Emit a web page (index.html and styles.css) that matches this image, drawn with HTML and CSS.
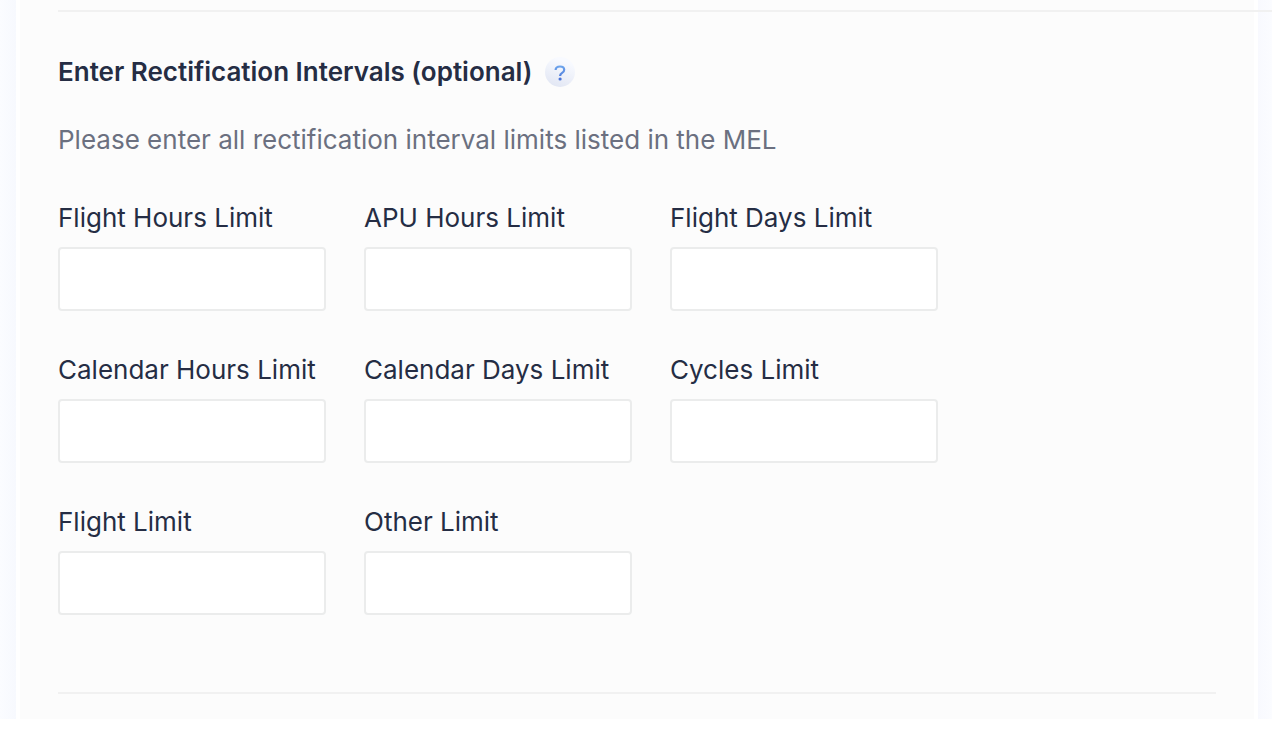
FILE: index.html
```
<!DOCTYPE html>
<html lang="en">
<head>
    <meta charset="UTF-8">
    <meta name="viewport" content="width=device-width, initial-scale=1.0">
    <title>Rectification Intervals</title>
    <link rel="stylesheet" href="styles.css">
</head>
<body>
    <main class="page">
        <form class="panel">
            <hr class="divider divider-wide">

            <section class="section">
                <div class="section-header">
                    <h2>Enter Rectification Intervals (optional)</h2>
                    <button type="button" class="help" aria-label="Help">
                        <svg width="30" height="30" viewBox="0 0 30 30" fill="none">
                            <defs>
                                <linearGradient id="help-mark" x1="0" y1="8" x2="0" y2="23" gradientUnits="userSpaceOnUse">
                                    <stop offset="0" stop-color="#6fa8ee"/>
                                    <stop offset="1" stop-color="#4a74d8"/>
                                </linearGradient>
                            </defs>
                            <path d="M10.6 13C10.7 10.8 12.5 9.5 15 9.5C17.6 9.5 19.2 10.8 19.2 12.8C19.2 14.3 18.4 15.1 17.1 15.9C15.6 16.8 15.1 17.5 15.1 19" stroke="url(#help-mark)" stroke-width="2.2"/>
                            <circle cx="15.1" cy="22" r="1.6" fill="#4a74d8"/>
                        </svg>
                    </button>
                </div>
                <p class="hint">Please enter all rectification interval limits listed in the MEL</p>

                <div class="fields">
                    <div class="field">
                        <label for="flight-hours">Flight Hours Limit</label>
                        <input type="text" id="flight-hours">
                    </div>
                    <div class="field">
                        <label for="apu-hours">APU Hours Limit</label>
                        <input type="text" id="apu-hours">
                    </div>
                    <div class="field">
                        <label for="flight-days">Flight Days Limit</label>
                        <input type="text" id="flight-days">
                    </div>
                    <div class="field">
                        <label for="calendar-hours">Calendar Hours Limit</label>
                        <input type="text" id="calendar-hours">
                    </div>
                    <div class="field">
                        <label for="calendar-days">Calendar Days Limit</label>
                        <input type="text" id="calendar-days">
                    </div>
                    <div class="field">
                        <label for="cycles">Cycles Limit</label>
                        <input type="text" id="cycles">
                    </div>
                    <div class="field">
                        <label for="flight">Flight Limit</label>
                        <input type="text" id="flight">
                    </div>
                    <div class="field">
                        <label for="other">Other Limit</label>
                        <input type="text" id="other">
                    </div>
                </div>
            </section>

            <hr class="divider">
        </form>
    </main>
</body>
</html>
```

FILE: styles.css
```
:root {
    --text: #252d44;
    --text-light: #6b7080;
    --border: #ebecec;
    --divider: #f1f1f1;
    --panel: #fcfcfc;
}

* {
    box-sizing: border-box;
    margin: 0;
    padding: 0;
}

body {
    font-family: Inter, 'Liberation Sans', sans-serif;
    font-size: 26px;
    line-height: 32px;
    color: var(--text);
    background: white;
}

.page {
    padding: 0 14px 0 16px;
    background: linear-gradient(to right, #fbfcff 0, #f7f9fe 16px, #f8f9fe calc(100% - 14px), #fbfcff 100%);
    overflow: hidden;
}

.panel {
    padding: 10px 38px 25px;
    background: var(--panel);
    border: solid white;
    border-width: 0 4px;
}

.divider {
    height: 2px;
    border: none;
    background: var(--divider);
}

/* runs past the panel to the edge of the page */
.divider-wide {
    margin-right: -56px;
}

.section {
    padding: 44px 0 77px;
}

.section-header {
    display: flex;
    align-items: center;
    gap: 13px;
}

h2 {
    font-size: 26px;
    font-weight: 600;
}

.help {
    width: 30px;
    height: 30px;
    border: none;
    border-radius: 50%;
    background: linear-gradient(200deg, #f8faff 20%, #dfe4f2 100%);
    cursor: pointer;
}

.help svg {
    display: block;
}

.hint {
    margin-top: 36px;
    color: var(--text-light);
}

.fields {
    display: grid;
    grid-template-columns: repeat(3, 1fr);
    gap: 43px 38px;
    max-width: 880px;
    margin-top: 46px;
}

.field {
    display: flex;
    flex-direction: column;
    gap: 13px;
}

.field label {
    white-space: nowrap;
}

.field input {
    width: 100%;
    height: 64px;
    padding: 0 16px;
    font: inherit;
    color: inherit;
    background: white;
    border: 2px solid var(--border);
    border-radius: 4px;
}

@media (max-width: 900px) {
    .fields {
        grid-template-columns: 1fr;
    }
}
```
